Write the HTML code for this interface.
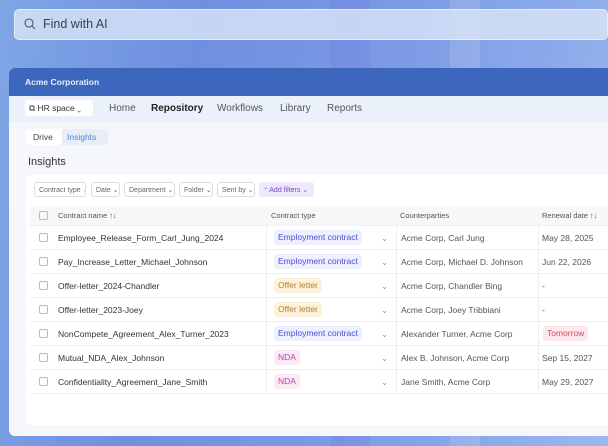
<!DOCTYPE html>
<html><head><style>
*{margin:0;padding:0;box-sizing:border-box}
html,body{width:608px;height:446px;overflow:hidden}
body{font-family:"Liberation Sans",sans-serif;position:relative;
background:linear-gradient(100deg,#7fa6e6 0%,#6f8fe0 30%,#7a98e4 55%,#8aa8ea 80%,#9bb8ee 100%)}
.bgstripe{position:absolute;top:0;height:446px}
.search{position:absolute;left:14px;top:9px;width:594px;height:31px;border:1px solid #e6edf9;border-radius:5px;background:rgba(214,226,246,.85);}
.search span{position:absolute;left:28px;top:7px;font-size:12.5px;color:#3a4150}
.win{position:absolute;left:9px;top:68px;width:599px;height:368px;border-radius:6px 0 0 6px;overflow:hidden;background:#f5f7fb}
.hdr{height:28px;background:#3d67bd;color:#e8eefa;font-size:8.5px;font-weight:bold;padding:9px 0 0 16px}
.nav{height:26px;background:#eaf1fb;position:relative;font-size:10px;color:#555}
.nav .sp{position:absolute;left:16px;top:4px;height:16px;width:68px;background:#fff;border-radius:3px;font-size:8.5px;color:#333;padding:3px 0 0 4px;white-space:nowrap}
.nav a{position:absolute;top:7px}
.t{position:absolute;font-size:8.5px;color:#333;white-space:nowrap}
.card{position:absolute;left:17px;top:107px;width:590px;height:250px;background:#fff;border-radius:5px 0 0 5px;overflow:hidden}
.f{position:absolute;top:7px;height:15px;border:1px solid #ddd;border-radius:3px;font-size:7px;color:#666;padding:3px 0 0 4px;white-space:nowrap;overflow:hidden}
.row{position:absolute;left:4px;width:600px;height:24px;border-bottom:1px solid #eef0f3}
.cb{position:absolute;left:9px;width:9px;height:9px;border:1px solid #bbb;border-radius:2px}
.tag{position:absolute;left:244px;top:4px;height:15px;border-radius:3px;font-size:8.5px;padding:2px 4px 0;white-space:nowrap}
.emp{background:#eeefff;color:#4a50d8}.off{background:#fdf2dc;color:#b98220}.nda{background:#fbe9f5;color:#b84aa7}
.vl{position:absolute;top:0;width:1px;height:100%;background:#eceef2}
</style></head><body>
<div class="bgstripe" style="left:330px;width:40px;background:rgba(110,120,220,.25)"></div>
<div class="bgstripe" style="left:450px;width:30px;background:rgba(255,255,255,.12)"></div>
<div class="search"><svg style="position:absolute;left:9px;top:8px" width="12" height="12" viewBox="0 0 12 12"><circle cx="5" cy="5" r="4" fill="none" stroke="#555" stroke-width="1.1"/><path d="M8 8l3 3" stroke="#555" stroke-width="1.1"/></svg><span>Find with AI</span></div>
<div class="win">
<div class="hdr">Acme Corporation</div>
<div class="nav"><div class="sp">⧉ HR space ⌄</div>
<a style="left:100px">Home</a><a style="left:142px;font-weight:bold;color:#222">Repository</a><a style="left:208px">Workflows</a><a style="left:271px">Library</a><a style="left:318px">Reports</a></div>
<div style="position:absolute;left:17px;top:61px;width:38px;height:16px;background:#fff;border-radius:3px 0 0 3px;font-size:8.5px;color:#444;padding:3px 0 0 7px">Drive</div>
<div style="position:absolute;left:53px;top:61px;width:46px;height:16px;background:#e8eef8;border-radius:0 3px 3px 0;font-size:8.5px;color:#4a86d6;padding:3px 0 0 5px">Insights</div>
<div class="t" style="left:19px;top:88px;font-size:11px">Insights</div>
<div class="card">
<div class="f" style="left:8px;width:52px">Contract type ⌄</div>
<div class="f" style="left:65px;width:29px">Date ⌄</div>
<div class="f" style="left:98px;width:51px">Department ⌄</div>
<div class="f" style="left:153px;width:34px">Folder ⌄</div>
<div class="f" style="left:191px;width:38px">Sent by ⌄</div>
<div class="f" style="left:233px;width:55px;background:#efe8fb;border-color:#efe8fb;color:#6b4bc4">⁺ Add filters ⌄</div>
<div class="row" style="top:31px;height:20px;background:#f6f7f9">
<div class="cb" style="top:5px"></div><div class="t" style="left:28px;top:5px;font-size:7.5px;color:#555">Contract name ↑↓</div>
<div class="t" style="left:241px;top:5px;font-size:7.5px;color:#555">Contract type</div>
<div class="t" style="left:370px;top:5px;font-size:7.5px;color:#555">Counterparties</div>
<div class="t" style="left:512px;top:5px;font-size:7.5px;color:#555">Renewal date ↑↓</div></div>
<div id="rows"></div>
<div class="t" style="left:12px;top:297px;font-size:7.5px;color:#666">List</div>
<div style="position:absolute;left:30px;top:294px;width:24px;height:14px;background:#f1f3f6;border-radius:3px;font-size:7.5px;color:#555;padding:2px 0 0 4px;white-space:nowrap">12 ⌄</div>
</div></div>
<script>
var d=[["Employee_Release_Form_Carl_Jung_2024","emp","Employment contract","Acme Corp, Carl Jung","May 28, 2025"],
["Pay_Increase_Letter_Michael_Johnson","emp","Employment contract","Acme Corp, Michael D. Johnson","Jun 22, 2026"],
["Offer-letter_2024-Chandler","off","Offer letter","Acme Corp, Chandler Bing","-"],
["Offer-letter_2023-Joey","off","Offer letter","Acme Corp, Joey Tribbiani","-"],
["NonCompete_Agreement_Alex_Turner_2023","emp","Employment contract","Alexander Turner, Acme Corp","T"],
["Mutual_NDA_Alex_Johnson","nda","NDA","Alex B. Johnson, Acme Corp","Sep 15, 2027"],
["Confidentiality_Agreement_Jane_Smith","nda","NDA","Jane Smith, Acme Corp","May 29, 2027"]];
var h="";d.forEach(function(r,i){var y=51+i*24;
h+='<div class="row" style="top:'+y+'px"><div class="cb" style="top:7px"></div><div class="t" style="left:28px;top:7px">'+r[0]+'</div><div class="vl" style="left:236px"></div><div class="tag '+r[1]+'">'+r[2]+'</div><div class="t" style="left:351px;top:7px;color:#888">⌄</div><div class="vl" style="left:366px"></div><div class="t" style="left:371px;top:7px;color:#555">'+r[3]+'</div><div class="vl" style="left:508px"></div>'+
(r[4]=="T"?'<div class="tag" style="left:513px;background:#fde8ec;color:#d14a66">Tomorrow</div>':'<div class="t" style="left:512px;top:7px;color:#555">'+r[4]+'</div>')+'</div>';});
document.getElementById("rows").innerHTML=h;
</script>
</body></html>
